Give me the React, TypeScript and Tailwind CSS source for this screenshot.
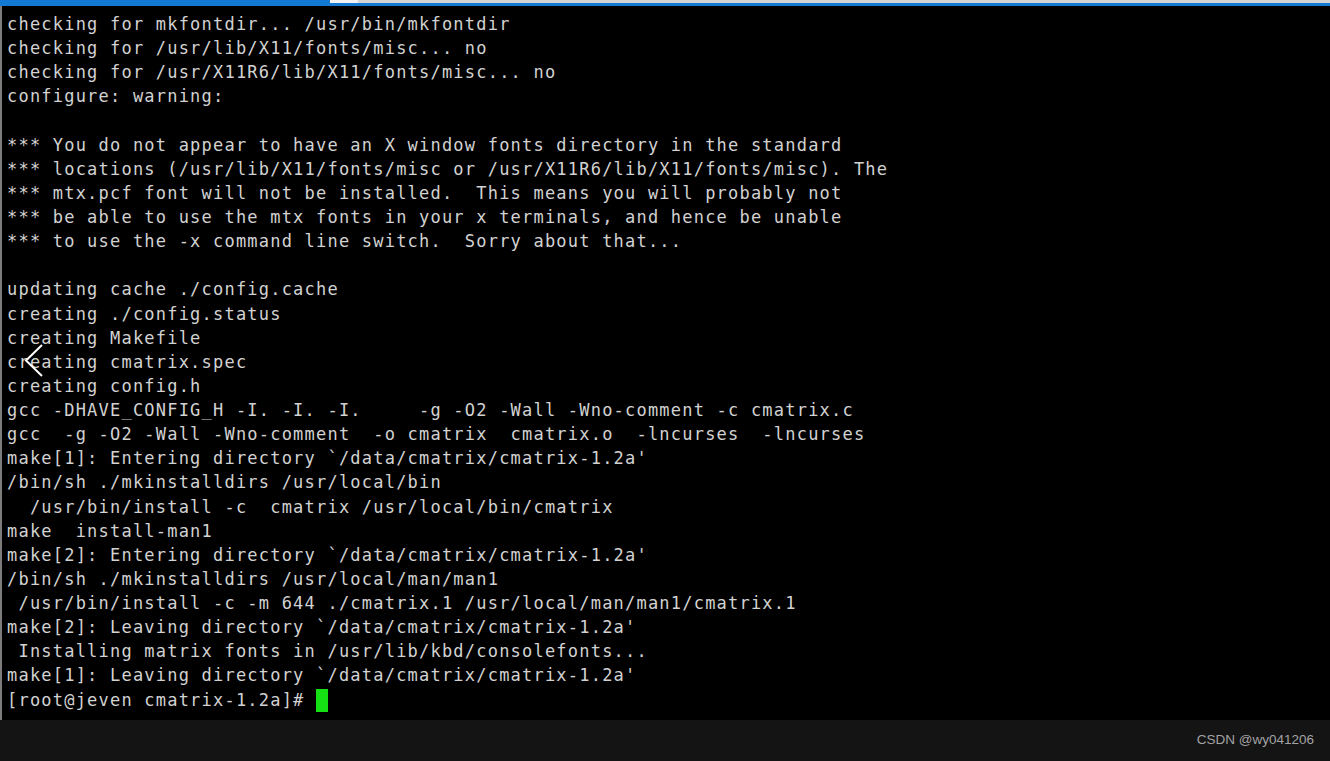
import React from "react";

const lines: string[] = [
  "checking for mkfontdir... /usr/bin/mkfontdir",
  "checking for /usr/lib/X11/fonts/misc... no",
  "checking for /usr/X11R6/lib/X11/fonts/misc... no",
  "configure: warning:",
  "",
  "*** You do not appear to have an X window fonts directory in the standard",
  "*** locations (/usr/lib/X11/fonts/misc or /usr/X11R6/lib/X11/fonts/misc). The",
  "*** mtx.pcf font will not be installed.  This means you will probably not",
  "*** be able to use the mtx fonts in your x terminals, and hence be unable",
  "*** to use the -x command line switch.  Sorry about that...",
  "",
  "updating cache ./config.cache",
  "creating ./config.status",
  "creating Makefile",
  "creating cmatrix.spec",
  "creating config.h",
  "gcc -DHAVE_CONFIG_H -I. -I. -I.     -g -O2 -Wall -Wno-comment -c cmatrix.c",
  "gcc  -g -O2 -Wall -Wno-comment  -o cmatrix  cmatrix.o  -lncurses  -lncurses",
  "make[1]: Entering directory `/data/cmatrix/cmatrix-1.2a'",
  "/bin/sh ./mkinstalldirs /usr/local/bin",
  "  /usr/bin/install -c  cmatrix /usr/local/bin/cmatrix",
  "make  install-man1",
  "make[2]: Entering directory `/data/cmatrix/cmatrix-1.2a'",
  "/bin/sh ./mkinstalldirs /usr/local/man/man1",
  " /usr/bin/install -c -m 644 ./cmatrix.1 /usr/local/man/man1/cmatrix.1",
  "make[2]: Leaving directory `/data/cmatrix/cmatrix-1.2a'",
  " Installing matrix fonts in /usr/lib/kbd/consolefonts...",
  "make[1]: Leaving directory `/data/cmatrix/cmatrix-1.2a'",
];

export default function App() {
  return (
    <div className="w-[1330px] h-[761px] flex flex-col bg-black overflow-hidden">
      {/* window top edge */}
      <div className="flex h-[3px]">
        <div className="w-[330px] bg-[#1479d2]" />
        <div className="w-[28px] bg-[#f2f2f2]" />
        <div className="flex-1 bg-[#d4d4d4]" />
      </div>
      <div className="h-[3px] bg-[#1479d2]" />

      {/* terminal */}
      <div className="relative flex-1 bg-black border-l-2 border-[#7c7c7c] pt-[6px] pl-[5px] text-[17px] leading-[24.14px] tracking-[1.21px] text-[#d2d2d2] font-['DejaVu_Sans_Mono',monospace]">
        {lines.map((line, i) => (
          <div key={i} className="whitespace-pre h-[24.14px]">
            {line}
          </div>
        ))}
        <div className="whitespace-pre h-[24.14px]">
          [root@jeven cmatrix-1.2a]#{" "}
          <span className="inline-block align-top w-[12px] h-[23px] mt-[1px] bg-[#14e014]" />
        </div>

        {/* back arrow overlay */}
        <svg
          className="absolute left-[19px] top-[334px]"
          width="24"
          height="40"
          viewBox="0 0 24 40"
          fill="none"
          stroke="#ffffff"
          strokeWidth="2"
        >
          <polyline points="21,5 5,20.5 21,36" />
        </svg>
      </div>

      {/* bottom strip */}
      <div className="h-[41px] bg-[#141414] flex items-center justify-end pr-[16px]">
        <span className="text-[13.5px] text-[#a3a3a3] font-['Liberation_Sans',Arial,sans-serif]">
          CSDN @wy041206
        </span>
      </div>
    </div>
  );
}
